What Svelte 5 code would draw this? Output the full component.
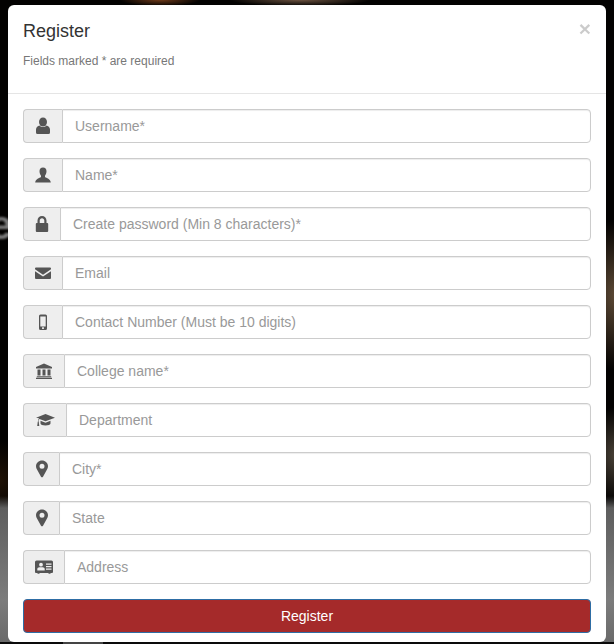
<script lang="ts">
    // icon shapes are drawn on a 20x20 box
    const fields = [
        { icon: 'user', addon: 39, placeholder: 'Username*' },
        { icon: 'person', addon: 39, placeholder: 'Name*' },
        { icon: 'lock', addon: 37, placeholder: 'Create password (Min 8 characters)*', type: 'password' },
        { icon: 'mail', addon: 39, placeholder: 'Email' },
        { icon: 'phone', addon: 39, placeholder: 'Contact Number (Must be 10 digits)' },
        { icon: 'bank', addon: 41, placeholder: 'College name*' },
        { icon: 'grad', addon: 43, placeholder: 'Department' },
        { icon: 'pin', addon: 36, placeholder: 'City*' },
        { icon: 'pin', addon: 36, placeholder: 'State' },
        { icon: 'card', addon: 41, placeholder: 'Address' }
    ];
</script>

<div class="page">
    <div class="backdrop" aria-hidden="true">
        <span class="stray">e</span>
    </div>

    <div class="modal">
        <div class="modal-header">
            <button type="button" class="close">×</button>
            <h4>Register</h4>
            <p>Fields marked * are required</p>
        </div>
        <form class="modal-body" onsubmit={(e) => e.preventDefault()}>
            {#each fields as field}
                <div class="input-group">
                    <span class="addon" style="width: {field.addon}px">
                        <svg viewBox="0 0 20 20" width="20" height="20" fill="#555">
                            {#if field.icon === 'user'}
                                <ellipse cx="10" cy="6" rx="4" ry="4.6" />
                                <path d="M3 16.500v-3C3 11.500 5 10 6.500 9.600 7.500 10.600 8.700 11.100 10 11.100s2.500-.5 3.500-1.500C15 10 17 11.500 17 13.500v3q0 1.500-1.500 1.500h-11Q3 18 3 16.500z" />
                            {:else if field.icon === 'person'}
                                <path d="M10 2.500c2.300 0 3.500 1.600 3.500 3.800 0 1.800-.7 3.400-1.500 4.400v1.300c1.500 1 5.500 2 5.800 5.500H2.200c.3-3.500 4.300-4.500 5.800-5.500v-1.300c-.8-1-1.500-2.600-1.500-4.400 0-2.200 1.200-3.800 3.500-3.800z" />
                            {:else if field.icon === 'lock'}
                                <path fill-rule="evenodd" d="M5.500 9V6.500C5.500 4 7.500 2 10 2s4.500 2 4.500 4.500V9h.7q1 0 1 1v7q0 1-1 1H4.800q-1 0-1-1v-7q0-1 1-1zM7.700 9h4.600V6.500c0-1.300-1-2.300-2.300-2.300s-2.300 1-2.300 2.300z" />
                            {:else if field.icon === 'mail'}
                                <path d="M3 4.500h14q1 0 1 1v.8l-8 5.400-8-5.400v-.8q0-1 1-1z" />
                                <path d="M2 8.300l8 5.300 8-5.300V15q0 1-1 1H3q-1 0-1-1z" />
                            {:else if field.icon === 'phone'}
                                <path fill-rule="evenodd" d="M7.500 2.500h5q1.500 0 1.500 1.500v12.500q0 1.500-1.500 1.500h-5Q6 18 6 16.500V4q0-1.500 1.500-1.500zM7.300 4.500v10h5.400v-10zM9.100 15.300h1.800v1.600H9.100z" />
                            {:else if field.icon === 'bank'}
                                <path fill-rule="evenodd" d="M10 2.500l8 3.600v1.400H2V6.100zM3.500 8.500h3v6h-3zM8.500 8.500h3v6h-3zM13.500 8.500h3v6h-3zM2.800 15.300h14.400v1H2.800zM2 16.800h16v1.200H2z" />
                            {:else if field.icon === 'grad'}
                                <path d="M10.500 4L20 7.700l-9.500 3.600-6-2.300c-.7.500-1 1.500-1 2.500.4.300.5.700.3 1.100l.5 3.400H2.200l.5-3.400c-.2-.4-.1-.8.300-1.100 0-1.300.3-2.400 1-3.200L1 7.700z" />
                                <path d="M5.500 10.800v2.800c0 1.100 2.200 2 5 2s5-.9 5-2v-2.800l-5 1.900z" />
                            {:else if field.icon === 'pin'}
                                <path fill-rule="evenodd" d="M10 1.500c3.300 0 6 2.500 6 5.700 0 1.300-.4 2.200-1 3.300l-4 7.300c-.4.700-1.600.7-2 0l-4-7.300c-.6-1.100-1-2-1-3.300 0-3.200 2.700-5.700 6-5.700zM10 4.800a2.500 2.500 0 1 0 0 5 2.500 2.500 0 0 0 0-5z" />
                            {:else}
                                <path fill-rule="evenodd" d="M2.500 3.500h15q1.500 0 1.500 1.500v10q0 1-1 1h-1.500v.8h-2V16h-9v.8h-2V16H2q-1 0-1-1V5q0-1.500 1.500-1.500zM7 5.800a1.900 1.900 0 1 0 0 3.800 1.900 1.900 0 0 0 0-3.800zM3.300 13.500h7.400v-1.500c0-1-1-1.800-2-1.800H5.300c-1 0-2 .8-2 1.800zM12 6.500v1.200h5.500V6.500zM12 9v1.200h5.500V9zM12 11.500v1.200h5.500v-1.200z" />
                            {/if}
                        </svg>
                    </span>
                    <input class="control" type={field.type ?? 'text'} placeholder={field.placeholder} />
                </div>
            {/each}
            <button type="submit" class="btn-register">Register</button>
        </form>
    </div>
</div>

<style>
    :global(body) {
        margin: 0;
        background: #000;
    }

    .page {
        position: relative;
        height: 644px;
        overflow: hidden;
        padding: 5px 8px 0;
        box-sizing: border-box;
        font-family: "Liberation Sans", Arial, sans-serif;
    }

    /* blurred photo behind the dialog */
    .backdrop {
        position: absolute;
        inset: 0;
        background:
            linear-gradient(to right, #0a0a0a 63px, #444 63px, #444 103px, #0a0a0a 103px) left bottom / 100% 2px no-repeat,
            linear-gradient(to bottom, transparent 496px, #5e5e5e 508px, #7c7c7c 600px, #6a6a6a 642px),
            radial-gradient(ellipse 40px 75px at 616px 295px, #5e4a36, transparent),
            radial-gradient(ellipse 30px 48px at 616px 455px, #4a4238, transparent),
            radial-gradient(ellipse 40px 6px at 160px 0, #6e3a1a, transparent),
            radial-gradient(ellipse 70px 6px at 300px 0, #6b5240, transparent),
            radial-gradient(ellipse 30px 40px at 0 480px, #1f1206, transparent),
            #030201;
    }

    .stray {
        position: absolute;
        left: -10px;
        top: 202px;
        font-size: 40px;
        font-weight: 700;
        color: #7c7c7c;
        filter: blur(1px);
        line-height: 46px;
    }

    .modal {
        position: relative;
        background: #fff;
        border-radius: 6px;
        height: 637px;
        box-sizing: border-box;
    }

    .modal-header {
        height: 89px;
        box-sizing: border-box;
        padding: 15px 15px 0;
        border-bottom: 1px solid #e5e5e5;
    }

    h4 {
        margin: 0;
        font-size: 18px;
        font-weight: 400;
        line-height: 22px;
        color: #333;
    }

    .modal-header p {
        margin: 11px 0 0;
        font-size: 12px;
        line-height: 17px;
        color: #777;
    }

    .close {
        float: right;
        padding: 0;
        margin-top: -2px;
        margin-right: 0;
        border: none;
        background: transparent;
        font-family: inherit;
        font-size: 21px;
        font-weight: 700;
        line-height: 1;
        color: #000;
        opacity: 0.2;
    }

    .modal-body {
        padding: 15px;
    }

    .input-group {
        display: flex;
        height: 34px;
        margin-bottom: 15px;
    }

    .addon {
        flex: none;
        display: flex;
        align-items: center;
        justify-content: center;
        box-sizing: border-box;
        background: #eee;
        border: 1px solid #ccc;
        border-right: none;
        border-radius: 4px 0 0 4px;
    }

    .control {
        flex: 1;
        min-width: 0;
        box-sizing: border-box;
        height: 34px;
        padding: 6px 12px;
        border: 1px solid #ccc;
        border-radius: 0 4px 4px 0;
        background: #fff;
        box-shadow: inset 0 1px 1px rgba(0, 0, 0, 0.075);
        font-family: inherit;
        font-size: 14px;
        color: #555;
    }

    .control::placeholder {
        color: #999;
        opacity: 1;
    }

    .btn-register {
        display: block;
        width: 100%;
        height: 34px;
        box-sizing: border-box;
        border: 1px solid #2e6da4;
        border-radius: 4px;
        background: #a52a2a;
        color: #fff;
        font-family: inherit;
        font-size: 14px;
    }
</style>
